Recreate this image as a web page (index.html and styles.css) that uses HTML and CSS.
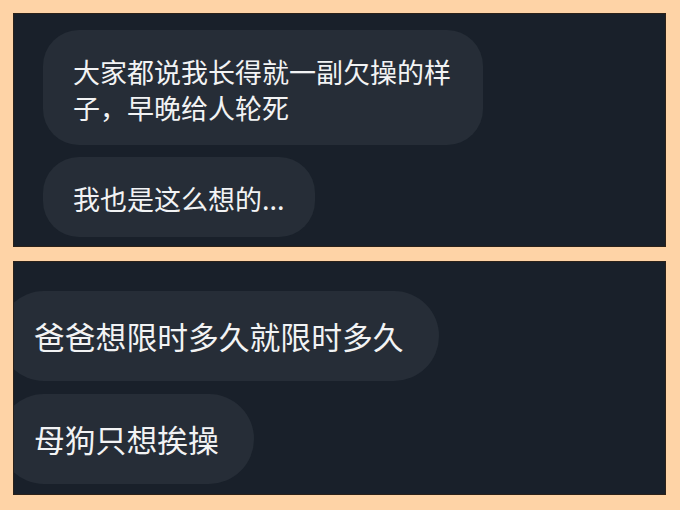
FILE: index.html
```html
<!DOCTYPE html>
<html lang="zh-CN">
<head>
<meta charset="utf-8">
<link rel="stylesheet" href="styles.css">
</head>
<body>
  <section class="panel panel-top">
    <div class="bubble bubble-sm bubble-wrap">大家都说我长得就一副欠操的样子，早晚给人轮死</div>
    <div class="bubble bubble-sm">我也是这么想的...</div>
  </section>
  <section class="panel panel-bottom">
    <div class="bubble bubble-lg">爸爸想限时多久就限时多久</div>
    <div class="bubble bubble-lg">母狗只想挨操</div>
  </section>
</body>
</html>
```

FILE: styles.css
```css
html, body {
  margin: 0;
  height: 510px;
}

body {
  box-sizing: border-box;
  width: 680px;
  padding: 13px 14px 15px 13px;
  background: #fed3a6;
  display: flex;
  flex-direction: column;
  gap: 14px;
  font-family: "Noto Sans CJK SC", "Noto Sans", sans-serif;
  overflow: hidden;
}

.panel {
  box-sizing: border-box;
  height: 234px;
  background: #19202a;
  border: 1px solid #2b2119;
  display: flex;
  flex-direction: column;
  align-items: flex-start;
  overflow: hidden;
}

.panel-top {
  padding: 16px 0 10px 29px;
  gap: 12px;
}

.panel-bottom {
  padding: 29px 0 10px 0;
  gap: 13px;
}

.bubble {
  background: #262d37;
  color: #f2f3f4;
  white-space: normal;
}

.bubble-sm {
  font-size: 27px;
  line-height: 35.5px;
  padding: 24px 30px 20px 30px;
  border-radius: 36px;
  max-width: 380px;
}

.bubble-lg {
  font-size: 30.8px;
  line-height: 40px;
  height: 40px;
  padding: 25px 35px 25px 35px;
  border-radius: 45px;
  margin-left: -15px;
  white-space: nowrap;
}
```
